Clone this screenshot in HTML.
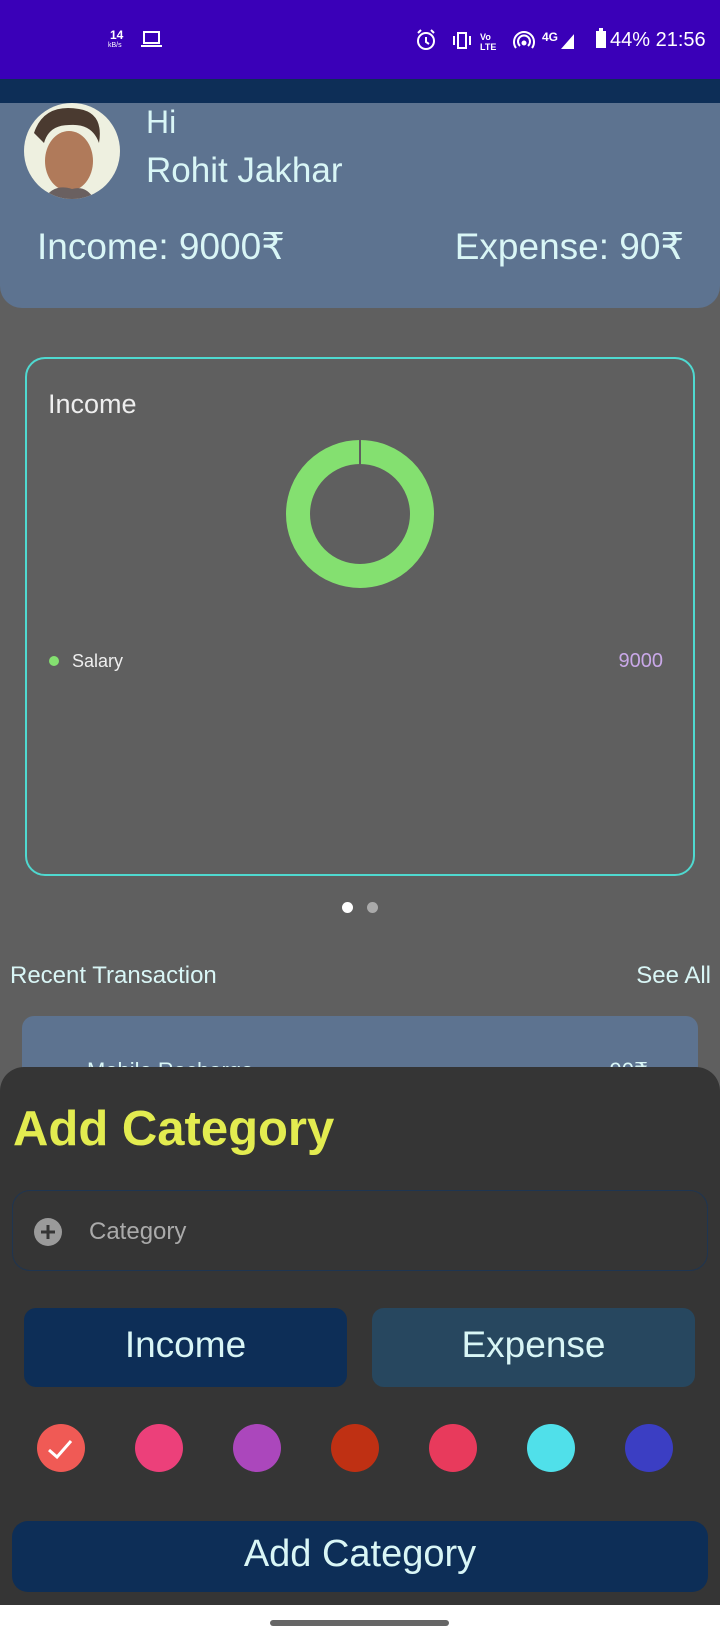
<!DOCTYPE html>
<html><head><meta charset="utf-8"><style>
*{margin:0;padding:0;box-sizing:border-box}
body{width:720px;height:1640px;background:#5f5f5f;font-family:"Liberation Sans","DejaVu Sans",sans-serif;position:relative;overflow:hidden}
.a{position:absolute}
.t{color:#d9f6f6;white-space:nowrap}
</style></head><body>
<div class="a" style="left:0;top:0;width:720px;height:79px;background:#3a00b8"></div>
<div class="a t" style="left:110px;top:28px;font-size:12px;font-weight:bold;color:#fff">14</div>
<div class="a t" style="left:108px;top:42px;font-size:7px;color:#fff">kB/s</div>
<svg class="a" style="left:140px;top:30px" width="24" height="20"><rect x="4" y="2" width="15" height="11" fill="none" stroke="#fff" stroke-width="2"/><rect x="1" y="15" width="21" height="2" fill="#fff"/></svg>
<svg class="a" style="left:414px;top:28px" width="160" height="24" fill="none" stroke="#fff" stroke-width="2">
<circle cx="12" cy="13" r="8"/><path d="M12 9v5l3 2M4 5l3-3M20 5l-3-3"/>
<rect x="44" y="5" width="8" height="15"/><path d="M40 8v9M56 8v9"/>
<text x="66" y="12" font-size="9" fill="#fff" stroke="none" font-weight="bold">Vo</text><text x="66" y="22" font-size="9" fill="#fff" stroke="none" font-weight="bold">LTE</text>
<path d="M102 20a10 10 0 1 1 16 0M106 18a6 6 0 1 1 8 0"/><circle cx="110" cy="15" r="1.5" fill="#fff"/>
<text x="128" y="13" font-size="12" fill="#fff" stroke="none" font-weight="bold">4G</text>
<path d="M147 21L161 5v16z" fill="#fff" stroke="none"/></svg>
<svg class="a" style="left:594px;top:28px" width="14" height="22"><rect x="2" y="3" width="10" height="17" fill="#fff"/><rect x="5" y="0" width="4" height="3" fill="#fff"/></svg>
<div class="a t" style="left:610px;top:29px;font-size:20px;color:#fff">44% 21:56</div>
<div class="a" style="left:0;top:79px;width:720px;height:26px;background:#0d2e57"></div>
<div class="a" style="left:0;top:103px;width:720px;height:205px;background:#5d7390;border-radius:0 0 22px 22px"></div>
<svg class="a" style="left:24px;top:103px" width="96" height="96"><defs><clipPath id="c"><circle cx="48" cy="48" r="48"/></clipPath></defs><g clip-path="url(#c)"><rect width="96" height="96" fill="#eef0e0"/><ellipse cx="45" cy="58" rx="24" ry="30" fill="#b07a5a"/><path d="M10 30Q20 0 55 6Q80 10 75 40Q68 20 45 22Q25 22 20 40Z" fill="#4a3a30"/><path d="M20 96Q30 80 48 86Q62 82 70 96Z" fill="#6a6060"/></g></svg>
<div class="a t" style="left:146px;top:104px;font-size:32px">Hi</div>
<div class="a t" style="left:146px;top:151px;font-size:35px">Rohit Jakhar</div>
<div class="a t" style="left:37px;top:225px;font-size:37px">Income: 9000₹</div>
<div class="a t" style="right:36px;top:225px;font-size:37px">Expense: 90₹</div>
<div class="a" style="left:25px;top:357px;width:670px;height:519px;border:2px solid #4fd9d0;border-radius:20px"></div>
<div class="a t" style="left:48px;top:389px;font-size:27px;color:#eee;font-weight:300">Income</div>
<svg class="a" style="left:280px;top:434px" width="160" height="160"><circle cx="80" cy="80" r="62" fill="none" stroke="#84e070" stroke-width="24"/><rect x="79" y="4" width="2" height="30" fill="#5f5f5f"/></svg>
<div class="a" style="left:49px;top:656px;width:10px;height:10px;border-radius:50%;background:#84e070"></div>
<div class="a t" style="left:72px;top:651px;font-size:18px;color:#eee">Salary</div>
<div class="a t" style="right:57px;top:650px;font-size:20px;color:#c9a8e8">9000</div>
<div class="a" style="left:342px;top:902px;width:11px;height:11px;border-radius:50%;background:#fff"></div>
<div class="a" style="left:367px;top:902px;width:11px;height:11px;border-radius:50%;background:#aaa"></div>
<div class="a t" style="left:10px;top:962px;font-size:24px">Recent Transaction</div>
<div class="a t" style="right:9px;top:962px;font-size:24px">See All</div>
<div class="a" style="left:22px;top:1016px;width:676px;height:80px;background:#5d7390;border-radius:12px"></div>
<div class="a t" style="left:87px;top:1058px;font-size:22px">Mobile Recharge</div>
<div class="a t" style="right:72px;top:1058px;font-size:22px">90₹</div>
<div class="a" style="left:0;top:1067px;width:720px;height:540px;background:#353535;border-radius:24px 24px 0 0"></div>
<div class="a t" style="left:13px;top:1101px;font-size:49px;font-weight:bold;color:#e3ec50">Add Category</div>
<div class="a" style="left:12px;top:1190px;width:696px;height:81px;border:1.5px solid #1f3550;border-radius:18px"></div>
<svg class="a" style="left:33px;top:1217px" width="30" height="30"><circle cx="15" cy="15" r="14" fill="#9a9a9a"/><path d="M15 8v14M8 15h14" stroke="#353535" stroke-width="3"/></svg>
<div class="a t" style="left:89px;top:1218px;font-size:24px;color:#aaa">Category</div>
<div class="a" style="left:24px;top:1308px;width:323px;height:79px;background:#0d2e57;border-radius:12px"></div>
<div class="a" style="left:372px;top:1308px;width:323px;height:79px;background:#27475f;border-radius:12px"></div>
<div class="a t" style="left:24px;width:323px;text-align:center;top:1324px;font-size:37px">Income</div>
<div class="a t" style="left:372px;width:323px;text-align:center;top:1324px;font-size:37px">Expense</div>
<div class="a" style="left:37px;top:1424px;width:48px;height:48px;border-radius:50%;background:#f05a55"></div>
<svg class="a" style="left:37px;top:1424px" width="48" height="48"><path d="M12 26l8 7 14-16" fill="none" stroke="#fff" stroke-width="3"/></svg>
<div class="a" style="left:135px;top:1424px;width:48px;height:48px;border-radius:50%;background:#ec407a"></div>
<div class="a" style="left:233px;top:1424px;width:48px;height:48px;border-radius:50%;background:#ab47bc"></div>
<div class="a" style="left:331px;top:1424px;width:48px;height:48px;border-radius:50%;background:#bf3013"></div>
<div class="a" style="left:429px;top:1424px;width:48px;height:48px;border-radius:50%;background:#e83a5c"></div>
<div class="a" style="left:527px;top:1424px;width:48px;height:48px;border-radius:50%;background:#50e0ea"></div>
<div class="a" style="left:625px;top:1424px;width:48px;height:48px;border-radius:50%;background:#3b3ec3"></div>
<div class="a" style="left:12px;top:1521px;width:696px;height:71px;background:#0d2e57;border-radius:16px"></div>
<div class="a t" style="left:12px;width:696px;text-align:center;top:1533px;font-size:38px">Add Category</div>
<div class="a" style="left:0;top:1605px;width:720px;height:35px;background:#fff"></div>
<div class="a" style="left:270px;top:1620px;width:179px;height:6px;border-radius:3px;background:#666"></div>
</body></html>
